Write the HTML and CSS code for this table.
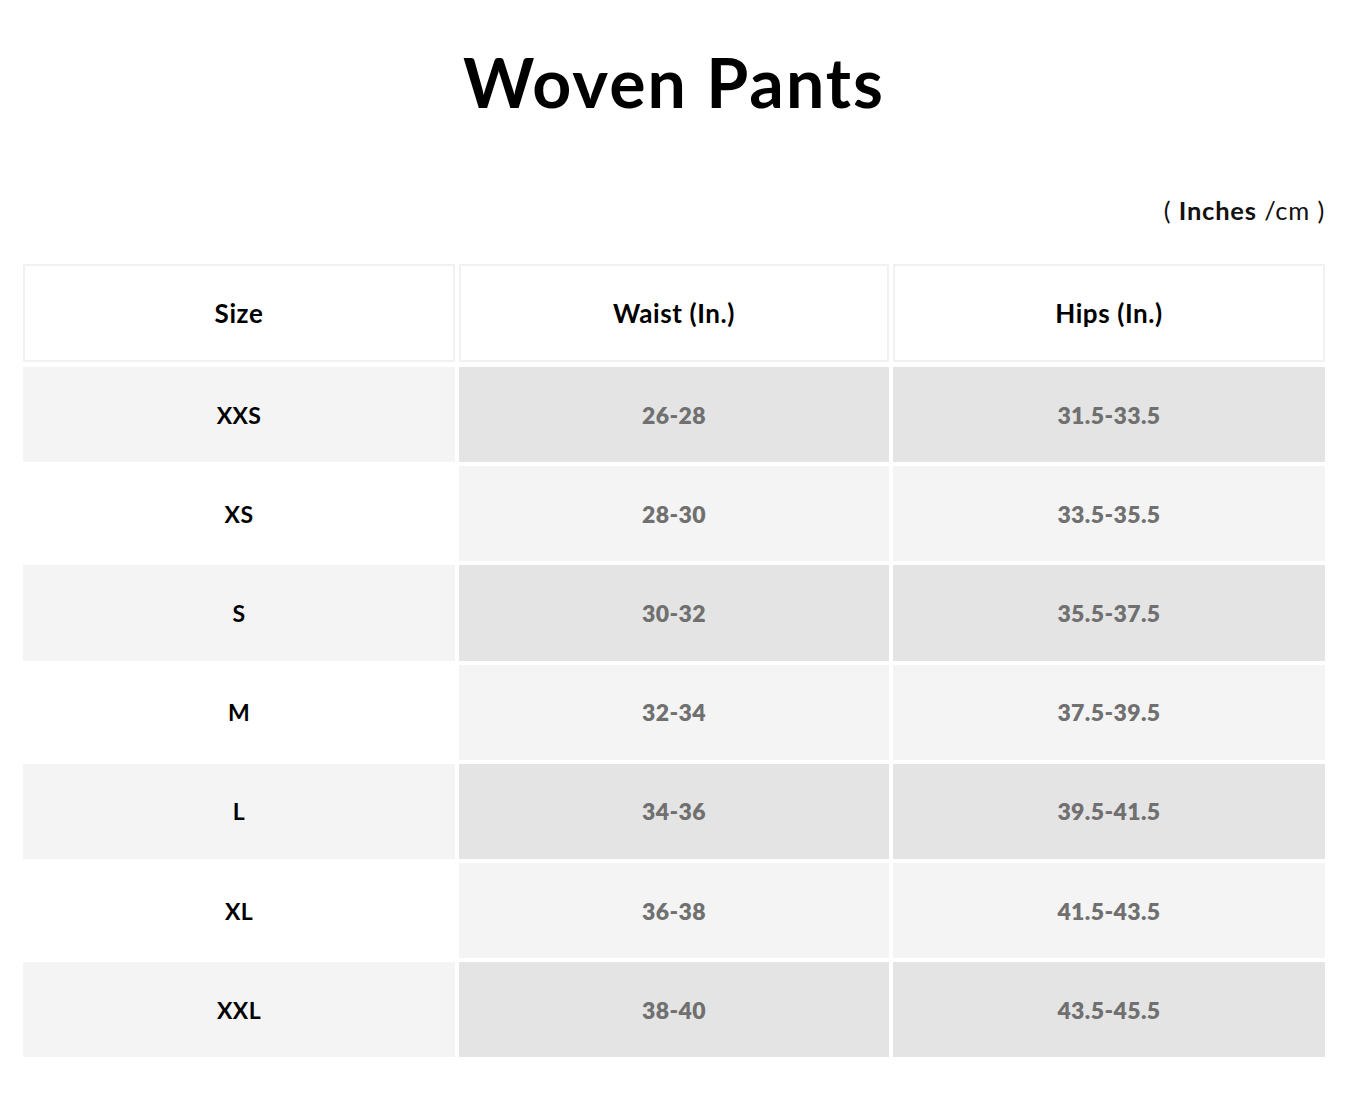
FILE: index.html
```html
<!DOCTYPE html>
<html>
<head>
<meta charset="utf-8">
<link rel="stylesheet" href="styles.css">
</head>
<body>
<div class="page">
  <h1 class="title">Woven Pants</h1>
  <div class="units">( <b>Inches</b> /cm )</div>
  <div class="chart">
    <div class="cell head">Size</div>
    <div class="cell head">Waist (In.)</div>
    <div class="cell head">Hips (In.)</div>

    <div class="cell size dark">XXS</div>
    <div class="cell val dark">26-28</div>
    <div class="cell val dark">31.5-33.5</div>

    <div class="cell size light">XS</div>
    <div class="cell val light">28-30</div>
    <div class="cell val light">33.5-35.5</div>

    <div class="cell size dark">S</div>
    <div class="cell val dark">30-32</div>
    <div class="cell val dark">35.5-37.5</div>

    <div class="cell size light">M</div>
    <div class="cell val light">32-34</div>
    <div class="cell val light">37.5-39.5</div>

    <div class="cell size dark">L</div>
    <div class="cell val dark">34-36</div>
    <div class="cell val dark">39.5-41.5</div>

    <div class="cell size light">XL</div>
    <div class="cell val light">36-38</div>
    <div class="cell val light">41.5-43.5</div>

    <div class="cell size dark">XXL</div>
    <div class="cell val dark">38-40</div>
    <div class="cell val dark">43.5-45.5</div>
  </div>
</div>
</body>
</html>
```
FILE: styles.css
```css
html, body {
  margin: 0;
  padding: 0;
  background: #fff;
}
body {
  font-family: Lato, "Open Sans", Arial, sans-serif;
  color: #000;
}
.page {
  width: 1302px;
  margin-left: 23px;
  padding-top: 40px;
}
.title {
  margin: 0;
  text-align: center;
  font-size: 68px;
  font-weight: 700;
  line-height: 84px;
  letter-spacing: 2px;
}
.units {
  margin-top: 70px;
  text-align: right;
  font-size: 25.5px;
  line-height: 32px;
  letter-spacing: 0.8px;
  color: #111;
}
.units b {
  font-weight: 700;
}
.chart {
  margin-top: 38px;
  display: grid;
  grid-template-columns: 432px 430px 432px;
  grid-template-rows: 99px;
  grid-auto-rows: 95.2px;
  column-gap: 4px;
  row-gap: 4px;
}
.cell {
  display: flex;
  align-items: center;
  justify-content: center;
  font-weight: 700;
  font-size: 23px;
  letter-spacing: 0.4px;
}
.head {
  background: #fff;
  border: 2px solid #f1f1f1;
  font-size: 26px;
  letter-spacing: 0.6px;
  color: #000;
  margin-bottom: 1px;
}
.size {
  color: #000;
}
.size.dark {
  background: #f4f4f4;
}
.size.light {
  background: #fff;
}
.val {
  color: #707070;
  font-weight: 800;
}
.val.dark {
  background: #e4e4e4;
}
.val.light {
  background: #f4f4f4;
}
```
